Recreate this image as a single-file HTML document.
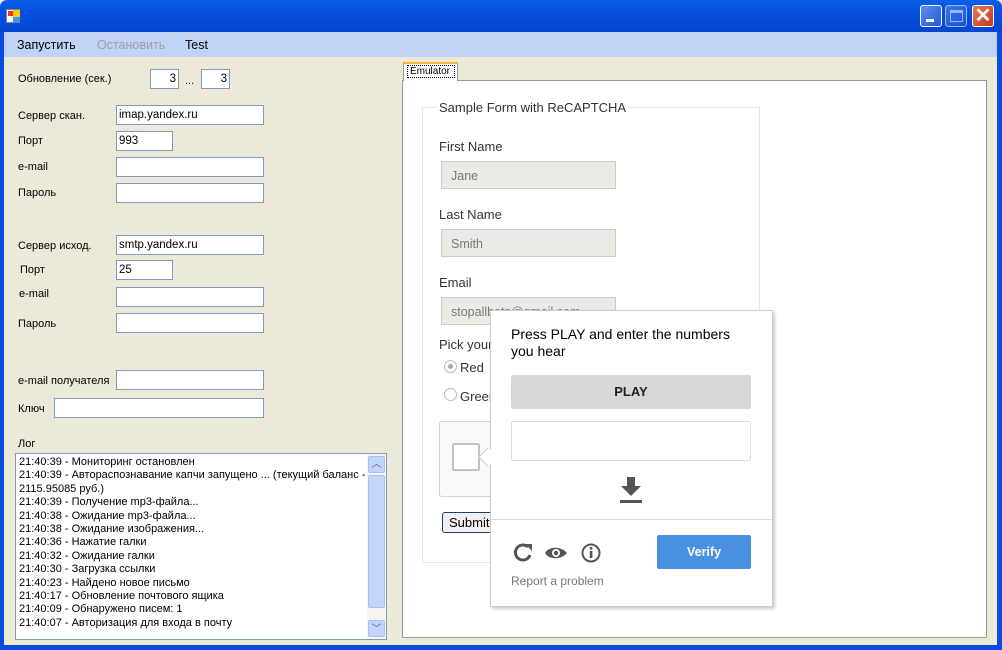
<!DOCTYPE html>
<html><head><meta charset="utf-8"><style>
*{margin:0;padding:0;box-sizing:border-box}
body{width:1002px;height:650px;overflow:hidden;position:relative;font-family:"Liberation Sans",sans-serif;font-size:11px;color:#000;background:#ece9d8}
.a{position:absolute}
.tb{left:0;top:0;width:1002px;height:32px;background:linear-gradient(#0a5fe8,#0450dd 40%,#0346d0);border-radius:7px 7px 0 0}
.lb{top:32px;left:0;width:4px;height:618px;background:#0a4be0}
.rb{top:32px;right:0;width:5px;height:618px;background:#0a4be0}
.bb{left:0;bottom:0;width:1002px;height:5px;background:#0a4be0}
.menu{left:4px;top:32px;width:993px;height:25px;background:#c1d3f7;font-size:12.5px}
.menu span{position:absolute;top:6px}
.inp{position:absolute;background:#fff;border:1px solid #7f9db9;height:20px;padding:0 2px;font-size:11.5px;line-height:18px}
.lab{position:absolute;font-size:11px}
.wb{position:absolute;top:5px;width:22px;height:22px;border:1px solid #fff;border-radius:3px;background:linear-gradient(135deg,#5b8ff5,#2359d8)}
.log div{line-height:13.4px;font-size:11px;white-space:nowrap}
.g{font-family:"Liberation Sans",sans-serif;color:#333}
.fin{position:absolute;left:441px;width:175px;height:28px;background:#ebebe6;border:1px solid #ccc;color:#777;font-size:12.5px;padding:7px 9px}
.fl{position:absolute;left:439px;font-size:13px;color:#333}
</style></head><body>
<div class="a tb"></div>
<div class="a" style="left:6px;top:9px;width:14px;height:14px;background:#fff;border:1px solid #888">
<div class="a" style="left:1px;top:1px;width:5px;height:5px;background:#e33"></div>
<div class="a" style="left:6px;top:0px;width:7px;height:7px;background:#fc0"></div>
<div class="a" style="left:6px;top:7px;width:7px;height:5px;background:#39f"></div></div>
<div class="wb" style="left:920px"><div class="a" style="left:5px;top:13px;width:8px;height:3px;background:#fff"></div></div>
<div class="wb" style="left:945px;opacity:.6"><div class="a" style="left:4px;top:4px;width:13px;height:12px;border:1px solid #fff;border-top-width:3px"></div></div>
<div class="wb" style="left:972px;background:linear-gradient(135deg,#e8795a,#c4391a);color:#fff;font-size:20px;font-weight:bold;text-align:center;line-height:20px">✕</div>
<div class="a lb"></div><div class="a rb"></div><div class="a bb"></div>
<div class="a menu"><span style="left:13px">Запустить</span><span style="left:93px;color:#a0a0a0">Остановить</span><span style="left:181px">Test</span></div>

<div class="lab" style="left:18px;top:73px">Обновление (сек.)</div>
<div class="inp" style="left:150px;top:69px;width:29px;text-align:right">3</div>
<div class="lab" style="left:185px;top:75px">...</div>
<div class="inp" style="left:201px;top:69px;width:29px;text-align:right">3</div>

<div class="lab" style="left:18px;top:110px">Сервер скан.</div><div class="inp" style="left:116px;top:105px;width:148px">imap.yandex.ru</div>
<div class="lab" style="left:18px;top:135px">Порт</div><div class="inp" style="left:116px;top:131px;width:57px">993</div>
<div class="lab" style="left:18px;top:161px">e-mail</div><div class="inp" style="left:116px;top:157px;width:148px"></div>
<div class="lab" style="left:18px;top:187px">Пароль</div><div class="inp" style="left:116px;top:183px;width:148px"></div>

<div class="lab" style="left:18px;top:240px">Сервер исход.</div><div class="inp" style="left:116px;top:235px;width:148px">smtp.yandex.ru</div>
<div class="lab" style="left:20px;top:264px">Порт</div><div class="inp" style="left:116px;top:260px;width:57px">25</div>
<div class="lab" style="left:19px;top:288px">e-mail</div><div class="inp" style="left:116px;top:287px;width:148px"></div>
<div class="lab" style="left:18px;top:318px">Пароль</div><div class="inp" style="left:116px;top:313px;width:148px"></div>
<div class="lab" style="left:18px;top:375px">e-mail получателя</div><div class="inp" style="left:116px;top:370px;width:148px"></div>
<div class="lab" style="left:18px;top:403px">Ключ</div><div class="inp" style="left:54px;top:398px;width:210px"></div>

<div class="lab" style="left:18px;top:438px">Лог</div>
<div class="a log" style="left:15px;top:453px;width:372px;height:187px;background:#fff;border:1px solid #7f9db9;padding:2px 3px">
<div>21:40:39 - Мониторинг остановлен</div>
<div>21:40:39 - Автораспознавание капчи запущено ... (текущий баланс -</div>
<div>2115.95085 руб.)</div>
<div>21:40:39 - Получение mp3-файла...</div>
<div>21:40:38 - Ожидание mp3-файла...</div>
<div>21:40:38 - Ожидание изображения...</div>
<div>21:40:36 - Нажатие галки</div>
<div>21:40:32 - Ожидание галки</div>
<div>21:40:30 - Загрузка ссылки</div>
<div>21:40:23 - Найдено новое письмо</div>
<div>21:40:17 - Обновление почтового ящика</div>
<div>21:40:09 - Обнаружено писем: 1</div>
<div>21:40:07 - Авторизация для входа в почту</div>
<div class="a" style="left:351px;top:0;width:19px;height:185px;background:#f5f4ee"></div>
<div class="a" style="left:352px;top:2px;width:17px;height:17px;background:#c4d5fb;border:1px solid #a9bff0;border-radius:2px;text-align:center;font-size:10px;color:#4d6185;line-height:15px">︿</div>
<div class="a" style="left:352px;top:21px;width:17px;height:133px;background:#c4d5fb;border:1px solid #a9bff0;border-radius:2px"></div>
<div class="a" style="left:352px;top:166px;width:17px;height:17px;background:#c4d5fb;border:1px solid #a9bff0;border-radius:2px;text-align:center;font-size:10px;color:#4d6185;line-height:17px">﹀</div>
</div>

<!-- tab -->
<div class="a" style="left:402px;top:80px;width:585px;height:558px;background:#fff;border:1px solid #919b9c"></div>
<div class="a" style="left:403px;top:62px;width:55px;height:19px;background:#fff;border:1px solid #919b9c;border-bottom:none;border-top:2px solid #f5b83a"></div>
<div class="a" style="left:407px;top:65px;width:48px;height:13px;border:1px dotted #000;font-size:10px;padding-left:2px;line-height:11px;white-space:nowrap;overflow:hidden">Emulator</div>

<div class="a" style="left:422px;top:107px;width:338px;height:456px;border:1px solid #e5e5e5"></div>
<div class="a g" style="left:437px;top:100px;background:#fff;padding:0 2px;font-size:13px">Sample Form with ReCAPTCHA</div>
<div class="fl" style="top:139px">First Name</div><div class="fin" style="top:161px">Jane</div>
<div class="fl" style="top:207px">Last Name</div><div class="fin" style="top:229px">Smith</div>
<div class="fl" style="top:275px">Email</div><div class="fin" style="top:297px">stopallbots@gmail.com</div>
<div class="fl" style="top:337px">Pick your</div>
<div class="a" style="left:444px;top:360px;width:13px;height:13px;border:1px solid #bbb;border-radius:50%"><div class="a" style="left:3px;top:3px;width:5px;height:5px;border-radius:50%;background:#aaa"></div></div>
<div class="fl" style="left:460px;top:360px">Red</div>
<div class="a" style="left:444px;top:388px;width:13px;height:13px;border:1px solid #bbb;border-radius:50%"></div>
<div class="fl" style="left:460px;top:389px">Green</div>
<div class="a" style="left:439px;top:421px;width:120px;height:76px;background:#f9f9f9;border:1px solid #d3d3d3;border-radius:3px"></div>
<div class="a" style="left:452px;top:443px;width:28px;height:28px;background:#fff;border:2px solid #c1c1c1;border-radius:2px"></div>
<div class="a" style="left:442px;top:512px;width:60px;height:21px;background:#f0f0f0;border:1px solid #1c3f6e;border-radius:3px;font-size:13px;padding:2px 6px">Submit</div>

<!-- popup -->
<div class="a" style="left:490px;top:310px;width:283px;height:297px;background:#fff;border:1px solid #ccc;box-shadow:2px 2px 3px rgba(0,0,0,.2)"></div>
<div class="a" style="left:481px;top:450px;width:14px;height:14px;background:#fff;border-left:1px solid #ccc;border-bottom:1px solid #ccc;transform:rotate(45deg)"></div>
<div class="a" style="left:511px;top:326px;font-size:14px;line-height:17px;color:#000">Press PLAY and enter the numbers<br>you hear</div>
<div class="a" style="left:511px;top:375px;width:240px;height:34px;background:#d8d8d8;border-radius:2px;text-align:center;line-height:34px;font-size:13px;font-weight:bold;color:#222">PLAY</div>
<div class="a" style="left:511px;top:421px;width:240px;height:40px;border:1px solid #ddd;border-radius:2px"></div>
<svg class="a" style="left:618px;top:476px" width="26" height="28" viewBox="0 0 26 28"><path d="M9 1h8v9h6l-10 10L3 10h6z" fill="#555"/><rect x="2" y="24" width="22" height="3" fill="#555"/></svg>
<div class="a" style="left:491px;top:519px;width:281px;height:1px;background:#ddd"></div>
<svg class="a" style="left:513px;top:542px" width="100" height="22" viewBox="0 0 100 22">
<path d="M15 5A7.5 7.5 0 1 0 17 13" fill="none" stroke="#555" stroke-width="3"/><path d="M12 2l7 0 0 7z" fill="#555"/>
<path d="M32 11c4-7 16-7 22 0c-6 7-18 7-22 0z" fill="#555"/><circle cx="43" cy="11" r="4" fill="#fff"/><circle cx="43" cy="11" r="2.2" fill="#555"/>
<circle cx="78" cy="11" r="8.5" fill="none" stroke="#555" stroke-width="2"/><rect x="76.8" y="9" width="2.6" height="7" fill="#555"/><rect x="76.8" y="5" width="2.6" height="2.6" fill="#555"/>
</svg>
<div class="a" style="left:657px;top:535px;width:94px;height:34px;background:#4a90e2;border-radius:2px;color:#fff;font-weight:bold;font-size:12.5px;text-align:center;line-height:34px">Verify</div>
<div class="a" style="left:511px;top:574px;font-size:12px;color:#777">Report a problem</div>
</body></html>
